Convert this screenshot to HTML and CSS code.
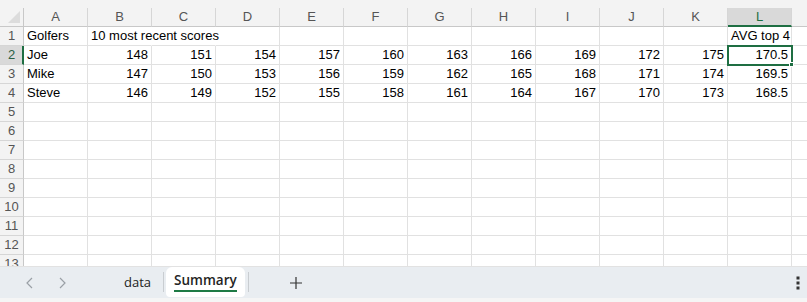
FILE: index.html
```html
<!DOCTYPE html>
<html>
	<head>
		<title>Summary</title>
		<link rel="stylesheet" href="styles.css">
	</head>

	<body>
		<div class="topstrip"></div>

		<div class="sheet">
			<div class="row head">
				<div class="rh corner"><span class="tri"></span></div>
				<div class="c">A</div><div class="c">B</div><div class="c">C</div><div class="c">D</div>
				<div class="c">E</div><div class="c">F</div><div class="c">G</div><div class="c">H</div>
				<div class="c">I</div><div class="c">J</div><div class="c">K</div><div class="c sel">L</div>
				<div class="c last"></div>
			</div>

			<div class="row">
				<div class="rh">1</div>
				<div class="c txt">Golfers</div><div class="c txt over nb">10 most recent scores</div><div class="c nb"></div><div class="c"></div>
				<div class="c"></div><div class="c"></div><div class="c"></div><div class="c"></div>
				<div class="c"></div><div class="c"></div><div class="c"></div><div class="c txt">AVG top 4</div>
				<div class="c last"></div>
			</div>

			<div class="row">
				<div class="rh sel">2</div>
				<div class="c txt">Joe</div><div class="c">148</div><div class="c">151</div><div class="c">154</div>
				<div class="c">157</div><div class="c">160</div><div class="c">163</div><div class="c">166</div>
				<div class="c">169</div><div class="c">172</div><div class="c">175</div><div class="c active">170.5<span class="handle"></span></div>
				<div class="c last"></div>
			</div>

			<div class="row">
				<div class="rh">3</div>
				<div class="c txt">Mike</div><div class="c">147</div><div class="c">150</div><div class="c">153</div>
				<div class="c">156</div><div class="c">159</div><div class="c">162</div><div class="c">165</div>
				<div class="c">168</div><div class="c">171</div><div class="c">174</div><div class="c">169.5</div>
				<div class="c last"></div>
			</div>

			<div class="row">
				<div class="rh">4</div>
				<div class="c txt">Steve</div><div class="c">146</div><div class="c">149</div><div class="c">152</div>
				<div class="c">155</div><div class="c">158</div><div class="c">161</div><div class="c">164</div>
				<div class="c">167</div><div class="c">170</div><div class="c">173</div><div class="c">168.5</div>
				<div class="c last"></div>
			</div>

			<div class="row"><div class="rh">5</div><div class="c"></div><div class="c"></div><div class="c"></div><div class="c"></div><div class="c"></div><div class="c"></div><div class="c"></div><div class="c"></div><div class="c"></div><div class="c"></div><div class="c"></div><div class="c"></div><div class="c last"></div></div>
			<div class="row"><div class="rh">6</div><div class="c"></div><div class="c"></div><div class="c"></div><div class="c"></div><div class="c"></div><div class="c"></div><div class="c"></div><div class="c"></div><div class="c"></div><div class="c"></div><div class="c"></div><div class="c"></div><div class="c last"></div></div>
			<div class="row"><div class="rh">7</div><div class="c"></div><div class="c"></div><div class="c"></div><div class="c"></div><div class="c"></div><div class="c"></div><div class="c"></div><div class="c"></div><div class="c"></div><div class="c"></div><div class="c"></div><div class="c"></div><div class="c last"></div></div>
			<div class="row"><div class="rh">8</div><div class="c"></div><div class="c"></div><div class="c"></div><div class="c"></div><div class="c"></div><div class="c"></div><div class="c"></div><div class="c"></div><div class="c"></div><div class="c"></div><div class="c"></div><div class="c"></div><div class="c last"></div></div>
			<div class="row"><div class="rh">9</div><div class="c"></div><div class="c"></div><div class="c"></div><div class="c"></div><div class="c"></div><div class="c"></div><div class="c"></div><div class="c"></div><div class="c"></div><div class="c"></div><div class="c"></div><div class="c"></div><div class="c last"></div></div>
			<div class="row"><div class="rh">10</div><div class="c"></div><div class="c"></div><div class="c"></div><div class="c"></div><div class="c"></div><div class="c"></div><div class="c"></div><div class="c"></div><div class="c"></div><div class="c"></div><div class="c"></div><div class="c"></div><div class="c last"></div></div>
			<div class="row"><div class="rh">11</div><div class="c"></div><div class="c"></div><div class="c"></div><div class="c"></div><div class="c"></div><div class="c"></div><div class="c"></div><div class="c"></div><div class="c"></div><div class="c"></div><div class="c"></div><div class="c"></div><div class="c last"></div></div>
			<div class="row"><div class="rh">12</div><div class="c"></div><div class="c"></div><div class="c"></div><div class="c"></div><div class="c"></div><div class="c"></div><div class="c"></div><div class="c"></div><div class="c"></div><div class="c"></div><div class="c"></div><div class="c"></div><div class="c last"></div></div>
			<div class="row"><div class="rh">13</div><div class="c"></div><div class="c"></div><div class="c"></div><div class="c"></div><div class="c"></div><div class="c"></div><div class="c"></div><div class="c"></div><div class="c"></div><div class="c"></div><div class="c"></div><div class="c"></div><div class="c last"></div></div>
		</div>

		<div class="tabbar">
			<span class="nav">
				<svg width="10" height="12" viewBox="0 0 10 12"><path d="M7 1 L2 6 L7 11" fill="none" stroke="#9aa0a6" stroke-width="1.2"/></svg>
			</span>
			<span class="nav">
				<svg width="10" height="12" viewBox="0 0 10 12"><path d="M3 1 L8 6 L3 11" fill="none" stroke="#9aa0a6" stroke-width="1.2"/></svg>
			</span>
			<span class="tab">data</span>
			<span class="sep"></span>
			<span class="tab current"><span class="label">Summary</span></span>
			<span class="sep"></span>
			<span class="add">
				<svg width="14" height="14" viewBox="0 0 14 14"><path d="M7 1 V13 M1 7 H13" stroke="#333" stroke-width="1.2"/></svg>
			</span>
			<span class="more">
				<svg width="4" height="14" viewBox="0 0 4 14"><rect x="0.5" y="0.5" width="3" height="3" fill="#333"/><rect x="0.5" y="5.5" width="3" height="3" fill="#333"/><rect x="0.5" y="10.5" width="3" height="3" fill="#333"/></svg>
			</span>
		</div>
		<div class="bottomstrip"></div>
	</body>
</html>
```

FILE: styles.css
```css
		* {
			box-sizing: border-box;
		}

		body {
			margin: 0;
			width: 807px;
			height: 302px;
			overflow: hidden;
			display: flex;
			flex-direction: column;
			font-family: "Liberation Sans", Arial, sans-serif;
			font-size: 13px;
			color: #000;
			background: #fff;
		}

		.topstrip {
			height: 8px;
			background: #f3f3f3;
		}

		.sheet {
			height: 258px;
			overflow: hidden;
		}

		.row {
			display: flex;
			height: 19px;
		}

		.rh {
			flex: 0 0 24px;
			min-width: 0;
			background: #f3f3f3;
			border-right: 1px solid #c8c8c8;
			border-bottom: 1px solid #d6d6d6;
			color: #555;
			font-size: 13px;
			text-align: center;
			line-height: 18px;
		}

		.rh.sel {
			background: #d9d9d9;
			border-right: 2px solid #1e6e42;
			color: #2b6045;
			padding-left: 1px;
		}

		.c {
			flex: 0 0 64px;
			min-width: 0;
			border-right: 1px solid #e1e1e1;
			border-bottom: 1px solid #e1e1e1;
			text-align: right;
			padding: 0 3px;
			line-height: 18px;
			white-space: nowrap;
			position: relative;
		}

		.c.txt {
			text-align: left;
			padding-right: 0;
		}

		.c.over {
			overflow: visible;
			z-index: 1;
		}

		.c.nb {
			border-right-color: #fff;
		}

		.c.last {
			flex: 1 1 auto;
			border-right: none;
		}

		.head .c,
		.head .rh {
			background: #f3f3f3;
			border-bottom: 1px solid #c8c8c8;
			border-right: 1px solid #d6d6d6;
			text-align: center;
			color: #555;
		}

		.head .c.last {
			border-right: none;
		}

		.head .c.sel {
			background: #d9d9d9;
			border-bottom: 2px solid #1e6e42;
			color: #1e6e42;
		}

		.head .corner {
			border-right: 1px solid #c8c8c8;
			position: relative;
		}

		.tri {
			position: absolute;
			right: 3px;
			bottom: 3px;
			width: 0;
			height: 0;
			border-left: 12px solid transparent;
			border-bottom: 12px solid #dcdcdc;
		}

		.c.active {
			outline: 2px solid #1e6e42;
			outline-offset: -1px;
			z-index: 2;
		}

		.handle {
			position: absolute;
			right: -3px;
			bottom: -3px;
			width: 5px;
			height: 5px;
			background: #1e6e42;
			border: 1px solid #fff;
		}

		.tabbar {
			height: 32px;
			background: #e9edf1;
			display: flex;
			align-items: flex-end;
			border-top: 1px solid #e2e2e2;
		}

		.nav {
			width: 32px;
			height: 31px;
			display: flex;
			align-items: center;
			justify-content: center;
		}

		.nav:first-child {
			margin-left: 14px;
		}

		.tab {
			height: 31px;
			line-height: 30px;
			font-family: "Open Sans", "Liberation Sans", sans-serif;
			font-size: 13px;
			color: #222;
			padding: 0 12px;
		}

		.tabbar .tab:nth-child(3) {
			margin-left: 34px;
		}

		.tab.current {
			background: #fff;
			border-radius: 6px 6px 4px 4px;
			margin: 0 3px 1px 2px;
			height: 30px;
			padding: 0 8px;
			font-weight: 600;
			font-size: 13.5px;
			color: #242424;
			line-height: 27px;
		}

		.tab.current .label {
			display: inline-block;
			border-bottom: 2px solid #1e7a45;
			line-height: 20px;
		}

		.sep {
			width: 1px;
			height: 20px;
			background: #c9cdd1;
			margin-bottom: 6px;
		}

		.add {
			height: 31px;
			display: flex;
			align-items: center;
			margin-left: 40px;
		}

		.more {
			height: 31px;
			display: flex;
			align-items: center;
			margin-left: auto;
			margin-right: 7px;
		}

		.bottomstrip {
			flex: 1 1 auto;
			background: #f5f5f5;
		}
```
